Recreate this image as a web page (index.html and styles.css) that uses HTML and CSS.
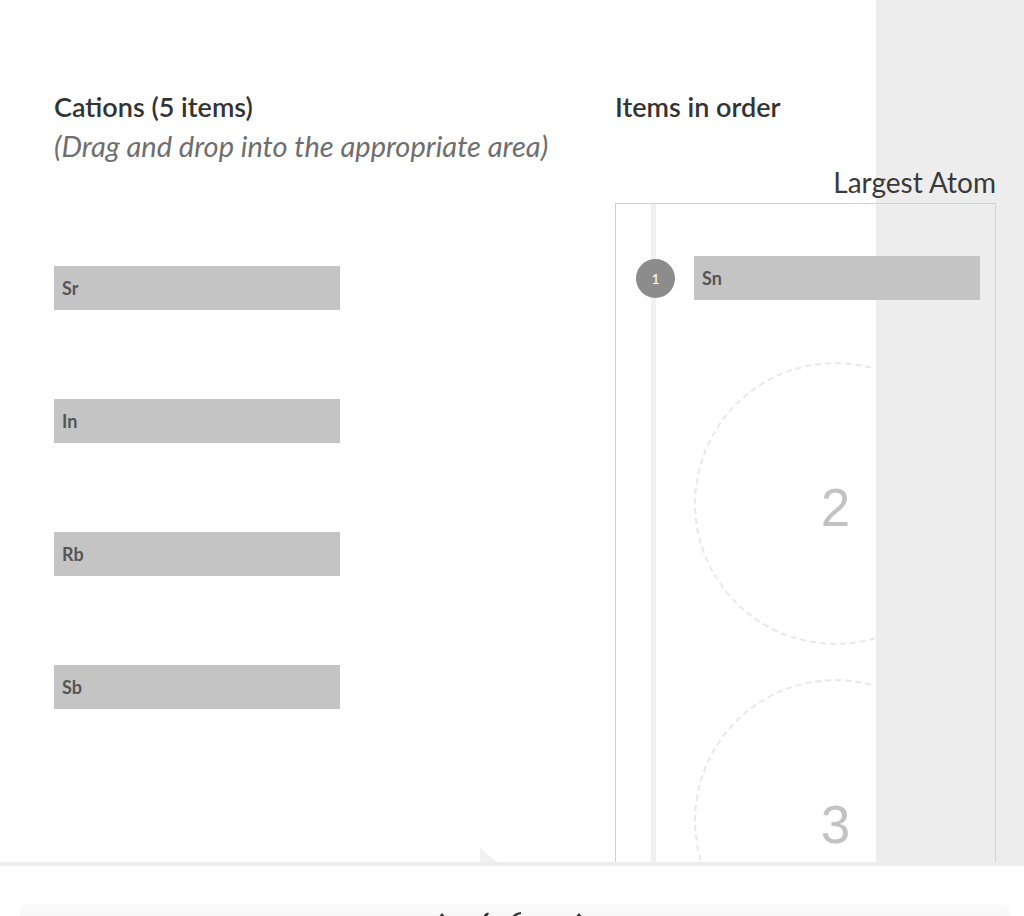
FILE: index.html
```html
<!DOCTYPE html>
<html lang="en">
<head>
<meta charset="utf-8">
<title>Cations ordering</title>
<link rel="stylesheet" href="styles.css">
</head>
<body>
<div class="main">
  <section class="source">
    <h2 class="title">Cations (5 items)</h2>
    <p class="hint">(Drag and drop into the appropriate area)</p>
    <div class="pool">
      <div class="chip">Sr</div>
      <div class="chip">In</div>
      <div class="chip">Rb</div>
      <div class="chip">Sb</div>
    </div>
  </section>
  <section class="target">
    <h2 class="title">Items in order</h2>
    <div class="endlabel">Largest Atom</div>
    <div class="panel">
      <div class="track"></div>
      <div class="row filled">
        <span class="badge">1</span>
        <div class="chip wide">Sn</div>
      </div>
      <div class="slot"><div class="ring"><span class="num">2</span></div></div>
      <div class="slot"><div class="ring"><span class="num">3</span></div></div>
    </div>
  </section>
  <span class="pointer"></span>
</div>
<footer class="footer">
  <div class="toolstrip">
    <svg class="tools" width="170" height="8" viewBox="0 0 170 8">
      <path d="M2 8 L7 2 L12 8 Z" fill="#333"/>
      <path d="M46 8 L50 3 Q52 1 54 2 L51 8 Z" fill="#333"/>
      <path d="M76 8 Q78 2 86 1 L86 3 Q80 4 80 8 Z" fill="#333"/>
      <path d="M139 8 L144 2 L149 8 Z" fill="#333"/>
    </svg>
  </div>
</footer>
</body>
</html>
```

FILE: styles.css
```css
* { box-sizing: border-box; }
html, body { margin: 0; padding: 0; }
body {
  width: 1024px;
  height: 916px;
  overflow: hidden;
  font-family: Lato, "Open Sans", "Liberation Sans", sans-serif;
  color: #333;
  background: #fff;
}
.main {
  position: relative;
  height: 862px;
  overflow: hidden;
  display: flex;
  padding: 91px 0 0 54px;
  background: linear-gradient(to right, #fff 876px, #ededed 876px);
}
.source {
  width: 561px;
  flex: none;
}
.title {
  margin: 0;
  font-size: 27px;
  line-height: 32px;
  font-weight: 600;
  color: #333;
}
.hint {
  margin: 5px 0 0;
  font-size: 29px;
  line-height: 36px;
  font-style: italic;
  color: #6e6e6e;
}
.pool {
  margin-top: 102px;
  display: flex;
  flex-direction: column;
  gap: 89px;
}
.chip {
  width: 286px;
  height: 44px;
  background: #c4c4c4;
  color: #555;
  font-size: 18px;
  font-weight: 700;
  line-height: 44px;
  padding-left: 8px;
}
.target {
  width: 381px;
  flex: none;
}
.endlabel {
  margin: 42px 0 4px;
  text-align: right;
  font-size: 28px;
  line-height: 34px;
  color: #3a3a3a;
}
.panel {
  position: relative;
  height: 700px;
  border: 1px solid #d2d2d2;
  border-bottom: none;
  padding: 52px 0 0 20px;
}
.track {
  position: absolute;
  left: 35px;
  top: 0;
  bottom: 0;
  width: 5px;
  background: #f0f0f0;
}
.row {
  position: relative;
  display: flex;
  align-items: center;
  gap: 19px;
}
.badge {
  width: 39px;
  height: 39px;
  border-radius: 50%;
  background: #8c8c8c;
  color: #fff;
  font-size: 14px;
  display: flex;
  align-items: center;
  justify-content: center;
}
.chip.wide { width: 286px; }
.slot {
  margin-left: 58px;
  width: 181px;
  height: 284px;
  overflow: hidden;
  margin-top: 62px;
}
.slot + .slot { margin-top: 33px; }
.ring {
  width: 283px;
  height: 283px;
  border-radius: 50%;
  border: 2px dashed #e8e8e8;
  display: flex;
  align-items: center;
  justify-content: center;
  padding-top: 8px;
}
.num {
  font-family: "Liberation Sans", Arial, sans-serif;
  font-size: 53px;
  color: #c2c2c2;
}
.pointer {
  position: absolute;
  left: 480px;
  bottom: 0;
  width: 0;
  height: 0;
  border-bottom: 14px solid #f1f1f1;
  border-right: 17px solid transparent;
}
.footer {
  height: 54px;
  border-top: 4px solid #ececec;
  background: #fff;
  padding-top: 37px;
}
.toolstrip {
  margin: 0 14px 0 20px;
  height: 13px;
  background: linear-gradient(to bottom, #fcfcfc, #f8f8f8);
  border-radius: 8px 8px 0 0;
  padding: 8px 0 0 415px;
}
.tools { display: block; }
```
